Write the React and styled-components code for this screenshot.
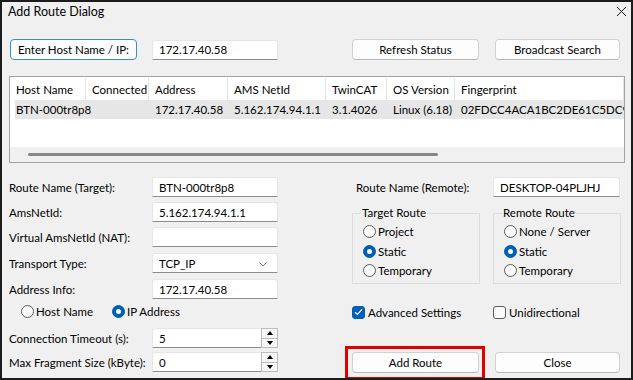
import React from 'react';
import styled, { createGlobalStyle } from 'styled-components';

const GlobalStyle = createGlobalStyle`
  html, body { margin: 0; padding: 0; background: #ffffff; }
  body { font-family: Lato, "Noto Sans", sans-serif; font-size: 11.5px; color: #000; }
  * { box-sizing: border-box; }
`;

const Window = styled.div`
  width: 633px;
  height: 380px;
  border: 2px solid #1c1c1c;
  background: #f0f0f0;
  display: flex;
  flex-direction: column;
  overflow: hidden;
`;
const TitleBar = styled.div`
  height: 18px;
  display: flex;
  align-items: center;
  justify-content: space-between;
  padding: 0 4px 0 6px;
  font-size: 12.5px;
`;
const TopRow = styled.div`
  display: flex;
  align-items: center;
  height: 21px;
  margin-top: 19px;
  padding: 0 11px 0 8px;
`;
const Button = styled.button`
  font: inherit;
  color: #000;
  width: ${p => p.$w || 127}px;
  height: 21px;
  margin-left: ${p => p.$ml || 0}px;
  padding: 0;
  background: #fdfdfd;
  border: 1px solid ${p => (p.$primary ? '#3f8cc4' : '#d1d1d1')};
  border-bottom-color: ${p => (p.$primary ? '#3f8cc4' : '#b8b8b8')};
  border-radius: 4px;
`;
const MarkFrame = styled.span`
  display: inline-flex;
  border: 3px solid #e00000;
  padding: 3px 3px 3px 4px;
  margin: -6px -6px -7px -7px;
`;
const Input = styled.div`
  width: ${p => p.$w || 126}px;
  height: 20px;
  margin-left: ${p => p.$ml || 0}px;
  background: #ffffff;
  border: 1px solid #e6e6e6;
  border-bottom-color: #8c8c8c;
  border-radius: 3px 3px 0 0;
  padding-left: 6px;
  display: flex;
  align-items: center;
  white-space: nowrap;
  position: relative;
`;
const Spacer = styled.div`flex: 1;`;

const ListBox = styled.div`
  margin: 16px 6px 0 7px;
  height: 87px;
  border: 1px solid #a3a3a3;
  background: #ffffff;
  display: flex;
  flex-direction: column;
  overflow: hidden;
`;
const cols = '76px 63px 79px 98px 61px 68px 1fr';
const ListHeader = styled.div`
  display: grid;
  grid-template-columns: ${cols};
  height: 22px;
  margin-top: 1px;
`;
const HeadCell = styled.div`
  padding-left: 6px;
  display: flex;
  align-items: center;
  border-right: 1px solid #e5e5e5;
  white-space: nowrap;
`;
const ListRow = styled.div`
  display: grid;
  grid-template-columns: ${cols};
  height: 19px;
  background: linear-gradient(to right, transparent 5px, #e6e6e6 5px);
`;
const Cell = styled.div`
  padding-left: 6px;
  display: flex;
  align-items: center;
  white-space: nowrap;
`;
const ScrollBar = styled.div`
  height: 15px;
  background: #f0f0f0;
  display: flex;
  align-items: center;
  padding-left: 18px;
`;
const Thumb = styled.div`
  width: 410px;
  height: 3px;
  border-radius: 2px;
  background: #858585;
`;

const Form = styled.div`
  display: flex;
  margin-top: 14px;
  padding-left: 7px;
`;
const LeftCol = styled.div`
  width: 343px;
  display: flex;
  flex-direction: column;
`;
const FieldRow = styled.div`
  display: flex;
  align-items: center;
  height: ${p => p.$h || 20}px;
  margin-top: ${p => p.$mt || 0}px;
  padding-left: ${p => p.$pl || 0}px;
`;
const Label = styled.div`
  width: ${p => p.$w || 143}px;
  padding-left: ${p => p.$pl || 0}px;
  white-space: nowrap;
`;
const RightCol = styled.div`
  width: 270px;
  display: flex;
  flex-direction: column;
`;
const Groups = styled.div`
  display: flex;
  gap: 13px;
  margin-top: 8px;
`;
const Group = styled.fieldset`
  width: 128px;
  margin: 0;
  min-width: 0;
  border: 1px solid #dcdcdc;
  padding: 0 0 3px 10px;
`;
const Legend = styled.legend`
  padding: 0 1px;
  margin-left: -2px;
  line-height: 16px;
`;
const Option = styled.label`
  display: flex;
  align-items: center;
  height: ${p => p.$h || 20}px;
  width: ${p => (p.$w ? p.$w + 'px' : 'auto')};
  white-space: nowrap;
`;
const RadioDot = styled.span`
  width: 13px;
  height: 13px;
  border-radius: 50%;
  margin-right: 2px;
  flex: none;
  display: flex;
  align-items: center;
  justify-content: center;
  background: ${p => (p.$on ? '#005fb8' : '#fbfbfb')};
  border: 1px solid ${p => (p.$on ? '#005fb8' : '#5c5c5c')};
  &::after {
    content: '';
    display: ${p => (p.$on ? 'block' : 'none')};
    width: 5px;
    height: 5px;
    border-radius: 50%;
    background: #ffffff;
  }
`;
const CheckBox = styled.span`
  width: 13px;
  height: 13px;
  border-radius: 3px;
  margin-right: 3px;
  flex: none;
  display: flex;
  align-items: center;
  justify-content: center;
  background: ${p => (p.$on ? '#005fb8' : '#fbfbfb')};
  border: 1px solid ${p => (p.$on ? '#005fb8' : '#5c5c5c')};
`;
const SpinBox = styled.div`
  position: absolute;
  right: -1px;
  top: -1px;
  width: 17px;
  height: 20px;
  display: flex;
  flex-direction: column;
`;
const SpinBtn = styled.div`
  flex: 1;
  background: #f6f6f6;
  border: 1px solid #bdbdbd;
  border-top-width: ${p => (p.$down ? 0 : 1)}px;
  display: flex;
  align-items: center;
  justify-content: center;
  &::after {
    content: '';
    border-left: 3px solid transparent;
    border-right: 3px solid transparent;
    ${p => (p.$down ? 'border-top: 4px solid #000;' : 'border-bottom: 4px solid #000;')}
  }
`;
const Chevron = styled.svg`
  position: absolute;
  right: 10px;
  top: 8px;
`;
const ButtonRow = styled.div`
  display: flex;
  margin-top: 31px;
`;

const Radio = ({ on, children, ...rest }) => (
  <Option {...rest}>
    <RadioDot $on={on} />
    {children}
  </Option>
);

const Check = ({ on, children, ...rest }) => (
  <Option {...rest}>
    <CheckBox $on={on}>
      {on && (
        <svg width="9" height="8" viewBox="0 0 9 8">
          <path d="M1 4.2 L3.4 6.4 L8 1.4" fill="none" stroke="#fff" strokeWidth="1.3" />
        </svg>
      )}
    </CheckBox>
    {children}
  </Option>
);

const Spin = ({ value }) => (
  <Input>
    {value}
    <SpinBox>
      <SpinBtn />
      <SpinBtn $down />
    </SpinBox>
  </Input>
);

const headers = ['Host Name', 'Connected', 'Address', 'AMS NetId', 'TwinCAT', 'OS Version', 'Fingerprint'];
const row = ['BTN-000tr8p8', '', '172.17.40.58', '5.162.174.94.1.1', '3.1.4026', 'Linux (6.18)', '02FDCC4ACA1BC2DE61C5DC91D'];

export default function App() {
  return (
    <>
      <GlobalStyle />
      <Window>
        <TitleBar>
          <span>Add Route Dialog</span>
          <svg width="11" height="11" viewBox="0 0 11 11">
            <path d="M1 1 L10 10 M10 1 L1 10" stroke="#1a1a1a" strokeWidth="1" />
          </svg>
        </TitleBar>
        <TopRow>
          <Button $primary>Enter Host Name / IP:</Button>
          <Input $ml={15}>172.17.40.58</Input>
          <Spacer />
          <Button>Refresh Status</Button>
          <Button $w={125} $ml={16}>Broadcast Search</Button>
        </TopRow>
        <ListBox>
          <ListHeader>
            {headers.map(h => <HeadCell key={h}>{h}</HeadCell>)}
          </ListHeader>
          <ListRow>
            {row.map((c, i) => <Cell key={i}>{c}</Cell>)}
          </ListRow>
          <Spacer />
          <ScrollBar><Thumb /></ScrollBar>
        </ListBox>
        <Form>
          <LeftCol>
            <FieldRow>
              <Label>Route Name (Target):</Label>
              <Input>BTN-000tr8p8</Input>
            </FieldRow>
            <FieldRow $mt={5}>
              <Label>AmsNetId:</Label>
              <Input>5.162.174.94.1.1</Input>
            </FieldRow>
            <FieldRow $mt={5}>
              <Label>Virtual AmsNetId (NAT):</Label>
              <Input />
            </FieldRow>
            <FieldRow $mt={6}>
              <Label>Transport Type:</Label>
              <Input>
                TCP_IP
                <Chevron width="8" height="5" viewBox="0 0 8 5">
                  <path d="M0.5 0.5 L4 4 L7.5 0.5" fill="none" stroke="#7a7a7a" strokeWidth="1" />
                </Chevron>
              </Input>
            </FieldRow>
            <FieldRow $mt={6}>
              <Label>Address Info:</Label>
              <Input>172.17.40.58</Input>
            </FieldRow>
            <FieldRow $mt={3} $h={18} $pl={12}>
              <Radio $w={91}>Host Name</Radio>
              <Radio on>IP Address</Radio>
            </FieldRow>
            <FieldRow $mt={8}>
              <Label>Connection Timeout (s):</Label>
              <Spin value="5" />
            </FieldRow>
            <FieldRow $mt={4}>
              <Label>Max Fragment Size (kByte):</Label>
              <Spin value="0" />
            </FieldRow>
          </LeftCol>
          <RightCol>
            <FieldRow>
              <Label $w={141} $pl={4}>Route Name (Remote):</Label>
              <Input $w={127}>DESKTOP-04PLJHJ</Input>
            </FieldRow>
            <Groups>
              <Group>
                <Legend>Target Route</Legend>
                <Radio>Project</Radio>
                <Radio on>Static</Radio>
                <Radio $h={19}>Temporary</Radio>
              </Group>
              <Group>
                <Legend>Remote Route</Legend>
                <Radio>None / Server</Radio>
                <Radio on>Static</Radio>
                <Radio $h={19}>Temporary</Radio>
              </Group>
            </Groups>
            <FieldRow $mt={19} $h={18}>
              <Check on $w={141}>Advanced Settings</Check>
              <Check>Unidirectional</Check>
            </FieldRow>
            <ButtonRow>
              <MarkFrame>
                <Button>Add Route</Button>
              </MarkFrame>
              <Button $w={125} $ml={16}>Close</Button>
            </ButtonRow>
          </RightCol>
        </Form>
      </Window>
    </>
  );
}
